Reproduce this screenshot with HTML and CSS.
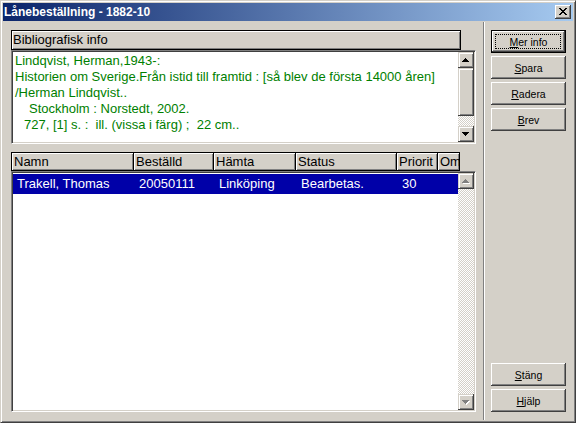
FILE: index.html
```html
<!DOCTYPE html>
<html lang="sv">
<head>
<meta charset="utf-8">
<title>Lånebeställning - 1882-10</title>
<link rel="stylesheet" href="styles.css">
</head>
<body>
<div class="window">
  <div class="titlebar">
    <span class="title">Lånebeställning - 1882-10</span>
    <div class="close">
      <svg width="8" height="8" viewBox="0 0 8 8" shape-rendering="crispEdges"><path fill="#000" d="M0 0h2v1H0zM6 0h2v1H6zM1 1h2v1H1zM5 1h2v1H5zM2 2h4v1H2zM3 3h2v1H3zM2 4h4v1H2zM1 5h2v1H1zM5 5h2v1H5zM0 6h2v1H0zM6 6h2v1H6z"/></svg>
    </div>
  </div>
  <div class="body">
    <div class="left">
      <div class="group-header">Bibliografisk info</div>
      <div class="textbox">
        <div class="text">
          <div class="line">Lindqvist, Herman,1943-:</div>
          <div class="line">Historien om Sverige.Från istid till framtid : [så blev de första 14000 åren]</div>
          <div class="line">/Herman Lindqvist..</div>
          <div class="line ind4">Stockholm : Norstedt, 2002.</div>
          <div class="line ind5">727, [1] s. :  ill. (vissa i färg) ;  22 cm..</div>
        </div>
        <div class="vscroll">
          <div class="sbtn"><svg width="8" height="4" viewBox="0 0 8 4" shape-rendering="crispEdges"><path fill="#000" d="M3 0h1v1h1v1h1v1h1v1H0V3h1V2h1V1h1z"/></svg></div>
          <div class="thumb"></div>
          <div class="track"></div>
          <div class="sbtn"><svg width="8" height="4" viewBox="0 0 8 4" shape-rendering="crispEdges"><path fill="#000" d="M0 0h7v1H6v1H5v1H4v1H3V3H2V2H1V1H0z"/></svg></div>
        </div>
      </div>
      <div class="list-header">
        <div class="hcell w1">Namn</div>
        <div class="hcell w2">Beställd</div>
        <div class="hcell w3">Hämta</div>
        <div class="hcell w4">Status</div>
        <div class="hcell w5">Priorit</div>
        <div class="hcell w6">Om</div>
      </div>
      <div class="listbox">
        <div class="rows">
          <div class="row selected"><span class="cell r1">Trakell, Thomas</span><span class="cell r2">20050111</span><span class="cell r3">Linköping</span><span class="cell r4">Bearbetas.</span><span class="cell r5">30</span></div>
        </div>
        <div class="vscroll">
          <div class="sbtn"><svg width="8" height="6" viewBox="0 0 8 6" shape-rendering="crispEdges"><path fill="#fff" transform="translate(1 2)" d="M3 0h1v1h1v1h1v1h1v1H0V3h1V2h1V1h1z"/><path fill="#808080" transform="translate(0 1)" d="M3 0h1v1h1v1h1v1h1v1H0V3h1V2h1V1h1z"/></svg></div>
          <div class="track"></div>
          <div class="sbtn"><svg width="8" height="6" viewBox="0 0 8 6" shape-rendering="crispEdges"><path fill="#fff" transform="translate(1 2)" d="M0 0h7v1H6v1H5v1H4v1H3V3H2V2H1V1H0z"/><path fill="#808080" transform="translate(0 1)" d="M0 0h7v1H6v1H5v1H4v1H3V3H2V2H1V1H0z"/></svg></div>
        </div>
      </div>
    </div>
    <div class="separator"></div>
    <div class="right">
      <button class="btn default"><u>M</u>er info</button>
      <button class="btn"><u>S</u>para</button>
      <button class="btn"><u>R</u>adera</button>
      <button class="btn"><u>B</u>rev</button>
      <div class="spacer"></div>
      <button class="btn"><u>S</u>täng</button>
      <button class="btn"><u>H</u>jälp</button>
    </div>
  </div>
</div>
</body>
</html>
```

FILE: styles.css
```css
* { box-sizing: border-box; }
html, body { margin: 0; padding: 0; }
body {
  width: 576px;
  height: 423px;
  overflow: hidden;
  background: #d4d0c8;
  font-family: "Liberation Sans", Arial, sans-serif;
  font-size: 13px;
  color: #000;
}

.window {
  width: 576px;
  height: 423px;
  display: flex;
  flex-direction: column;
  background: #d4d0c8;
  border: 1px solid;
  border-color: #d4d0c8 #404040 #404040 #d4d0c8;
  box-shadow: inset 1px 1px #fff, inset -1px -1px #808080;
  padding: 2px;
}

.titlebar {
  flex: none;
  height: 18px;
  display: flex;
  align-items: center;
  justify-content: space-between;
  padding: 0 2px 0 1px;
  background: linear-gradient(to right, #0a246a, #a6caf0);
}
.title {
  color: #fff;
  font-weight: bold;
  font-size: 12px;
  line-height: 18px;
  white-space: nowrap;
}
.close {
  width: 16px;
  height: 14px;
  display: flex;
  align-items: flex-start;
  justify-content: center;
  padding-top: 3px;
  background: #d4d0c8;
  box-shadow: inset -1px -1px #404040, inset 1px 1px #fff, inset -2px -2px #808080;
}
.close svg { display: block; }

.body {
  flex: 1;
  min-height: 0;
  display: flex;
  padding: 0 7px 0 8px;
}

.left {
  width: 465px;
  flex: none;
  display: flex;
  flex-direction: column;
  padding: 9px 0 8px;
}

.group-header {
  width: 450px;
  height: 20px;
  flex: none;
  border: 1px solid #000;
  box-shadow: inset 1px 1px #fff, inset -1px -1px #808080;
  padding-left: 1px;
  line-height: 18px;
  white-space: nowrap;
}

.textbox {
  height: 94px;
  flex: none;
  display: flex;
  border: 1px solid;
  border-color: #808080 #fff #fff #808080;
  box-shadow: inset 1px 1px #404040, inset -1px -1px #d4d0c8;
  padding: 1px;
}
.text {
  flex: 1;
  min-width: 0;
  background: #fff;
  color: #008000;
  padding: 1px 0 0 2px;
  line-height: 16px;
  overflow: hidden;
}
.line {
  height: 16px;
  white-space: pre;
}
.ind4 { padding-left: 14px; }
.ind5 { padding-left: 9px; }

.vscroll {
  width: 16px;
  flex: none;
  display: flex;
  flex-direction: column;
}
.sbtn, .thumb {
  flex: none;
  background: #d4d0c8;
  box-shadow: inset -1px -1px #404040, inset 1px 1px #d4d0c8, inset 2px 2px #fff, inset -2px -2px #808080;
}
.sbtn {
  height: 16px;
  display: flex;
  align-items: center;
  justify-content: center;
}
.sbtn svg { display: block; }
.thumb { height: 48px; }
.track {
  flex: 1;
  background-image: repeating-conic-gradient(#fff 0 25%, #d4d0c8 0 50%);
  background-size: 2px 2px;
}

.list-header {
  flex: none;
  height: 19px;
  margin-top: 8px;
  display: flex;
}
.hcell {
  flex: none;
  height: 19px;
  border: 1px solid #000;
  border-left: none;
  box-shadow: inset 1px 1px #fff, inset -1px -1px #808080;
  padding-left: 2px;
  line-height: 17px;
  white-space: nowrap;
  overflow: hidden;
}
.hcell:first-child { border-left: 1px solid #000; }
.w1 { width: 123px; }
.w2 { width: 80px; }
.w3 { width: 82px; }
.w4 { width: 101px; }
.w5 { width: 41px; }
.w6 { width: 22px; }

.listbox {
  flex: 1;
  min-height: 0;
  display: flex;
  border: 1px solid;
  border-color: #808080 #fff #fff #808080;
  box-shadow: inset 1px 1px #404040, inset -1px -1px #d4d0c8;
  padding: 1px;
}
.rows {
  flex: 1;
  min-width: 0;
  background: #fff;
  padding-top: 1px;
}
.row {
  height: 20px;
  display: flex;
  line-height: 20px;
  white-space: nowrap;
}
.row.selected {
  background: #0000a8;
  color: #fff;
}
.cell {
  flex: none;
  padding-left: 5px;
  overflow: hidden;
}
.r1 { width: 121px; padding-left: 4px; }
.r2 { width: 80px; }
.r3 { width: 82px; }
.r4 { width: 101px; }
.r5 { width: 41px; }

.separator {
  width: 2px;
  flex: none;
  margin: 1px 6px 0 7px;
  border-left: 1px solid #808080;
  border-right: 1px solid #fff;
}

.right {
  width: 75px;
  flex: none;
  display: flex;
  flex-direction: column;
  gap: 3px;
  padding: 9px 0 8px;
}
.spacer { flex: 1; }

.btn {
  position: relative;
  flex: none;
  width: 75px;
  height: 23px;
  margin: 0;
  padding: 0;
  border: none;
  background: #d4d0c8;
  color: #000;
  font-family: "Liberation Sans", Arial, sans-serif;
  font-size: 10.5px;
  line-height: 12px;
  display: flex;
  align-items: center;
  justify-content: center;
  box-shadow: inset -1px -1px #404040, inset 1px 1px #fff, inset -2px -2px #808080;
}
.btn u { text-decoration: underline; text-underline-offset: 1px; }
.btn.default {
  border: 1px solid #000;
}
.btn.default::after {
  content: "";
  position: absolute;
  left: 3px;
  top: 3px;
  right: 4px;
  bottom: 3px;
  border: 1px dotted #000;
}
```
